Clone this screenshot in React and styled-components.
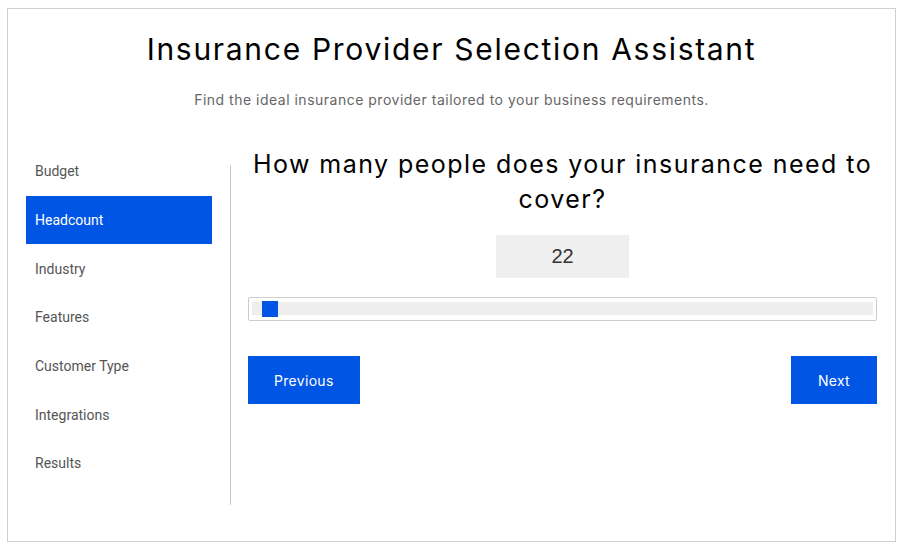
import React, { useState } from 'react';
import styled, { createGlobalStyle } from 'styled-components';

const GlobalStyle = createGlobalStyle`
    body {
        margin: 8px 9px 8px 7px;
        background: #fff;
        font-family: Inter, "Open Sans", sans-serif;
    }
`;

const Card = styled.div`
    border: 1px solid #cfcfcf;
    box-shadow: 0 2px 4px rgba(0, 0, 0, 0.08);
    padding: 0 18px 35px 18px;
    height: 534px;
    box-sizing: border-box;
`;

const Header = styled.header`
    text-align: center;
    padding-top: 22px;
    height: 138px;
    box-sizing: border-box;
`;

const Title = styled.h1`
    margin: 0;
    font-size: 30px;
    font-weight: 400;
    line-height: 36px;
    color: #000;
    letter-spacing: 1.7px;
`;

const Subtitle = styled.p`
    margin: 24px 0 0;
    font-size: 14px;
    line-height: 18px;
    color: #666;
    letter-spacing: 0.5px;
`;

const Body = styled.div`
    display: flex;
    height: 358px;
`;

const Nav = styled.nav`
    width: 186px;
    display: flex;
    flex-direction: column;
`;

const NavItem = styled.div`
    height: 48.67px;
    flex-shrink: 0;
    display: flex;
    align-items: center;
    padding-left: 9px;
    font-family: Roboto, sans-serif;
    font-size: 14px;
    color: ${p => (p.active ? '#fff' : '#555')};
    background: ${p => (p.active ? '#0055e5' : 'transparent')};
    cursor: pointer;
`;

const Divider = styled.div`
    width: 1px;
    background: #c8c8c8;
    margin: 18px 17px 0 18px;
`;

const Main = styled.main`
    flex: 1;
    display: flex;
    flex-direction: column;
`;

const Question = styled.h2`
    margin: 0;
    text-align: center;
    font-size: 25px;
    font-weight: 400;
    line-height: 35px;
    color: #000;
    letter-spacing: 1.45px;
`;

const Value = styled.div`
    align-self: center;
    width: 133px;
    height: 43px;
    margin-top: 18px;
    background: #efefef;
    display: flex;
    align-items: center;
    justify-content: center;
    font-family: "Liberation Sans", Arial, sans-serif;
    font-size: 20px;
    color: #333;
`;

const SliderBox = styled.div`
    margin-top: 19px;
    height: 24px;
    border: 1px solid #cccccc;
    border-radius: 2px;
    box-sizing: border-box;
    padding: 4px 3px;
`;

const Track = styled.div`
    position: relative;
    height: 13px;
    background: #eeeeef;
`;

const Thumb = styled.div`
    position: absolute;
    top: -1px;
    width: 16px;
    height: 16px;
    background: #0055e5;
`;

const Actions = styled.div`
    display: flex;
    justify-content: space-between;
    margin-top: 35px;
`;

const Button = styled.button`
    height: 48px;
    padding: 0 ${p => p.pad}px;
    border: none;
    background: #0055e5;
    color: #fff;
    font-family: Inter, "Open Sans", sans-serif;
    font-size: 14px;
    letter-spacing: 0.3px;
    cursor: pointer;
`;

const steps = ['Budget', 'Headcount', 'Industry', 'Features', 'Customer Type', 'Integrations', 'Results'];

export default function App() {
    const [active, setActive] = useState(1);
    const count = 22;
    const min = 20;
    const max = 5000;
    const pct = ((count - min) / (max - min)) * 100;

    return (
        <>
            <GlobalStyle />
            <Card>
                <Header>
                    <Title>Insurance Provider Selection Assistant</Title>
                    <Subtitle>Find the ideal insurance provider tailored to your business requirements.</Subtitle>
                </Header>
                <Body>
                    <Nav>
                        {steps.map((s, i) => (
                            <NavItem key={s} active={i === active} onClick={() => setActive(i)}>
                                {s}
                            </NavItem>
                        ))}
                    </Nav>
                    <Divider />
                    <Main>
                        <Question>How many people does your insurance need to cover?</Question>
                        <Value>{count}</Value>
                        <SliderBox>
                            <Track>
                                <Thumb style={{ left: `calc(${pct}% + 10px)` }} />
                            </Track>
                        </SliderBox>
                        <Actions>
                            <Button pad={26}>Previous</Button>
                            <Button pad={27}>Next</Button>
                        </Actions>
                    </Main>
                </Body>
            </Card>
        </>
    );
}
